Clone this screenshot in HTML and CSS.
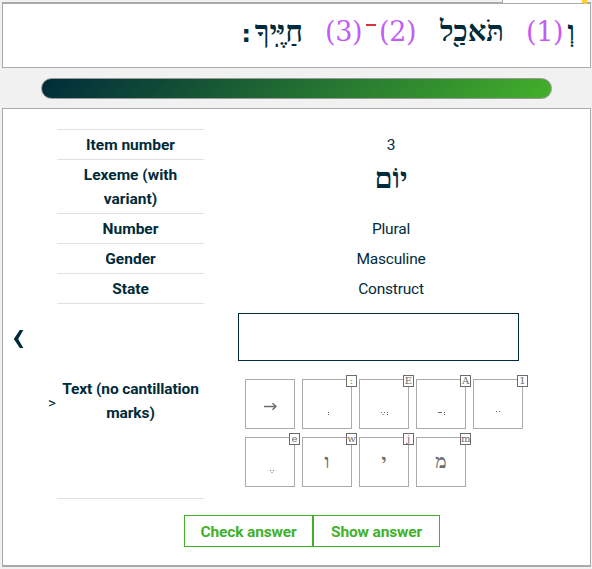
FILE: index.html
```html
<!DOCTYPE html>
<html lang="en">
<head>
<meta charset="utf-8">
<title>Quiz</title>
<link rel="stylesheet" href="styles.css">
</head>
<body>
<header class="verse">
  <div class="corner"></div>
  <span class="word word-end" lang="he">חַיֶּֽיךָ<span class="stop">׃</span></span>
  <span class="ref">(3)</span>
  <span class="maqaf"></span>
  <span class="ref ref-two">(2)</span>
  <span class="word word-mid" lang="he">תֹּאכַ֖ל</span>
  <span class="ref ref-one">(1)</span>
  <span class="word word-vav" lang="he">וְ</span>
</header>
<div class="progress"><div class="bar"></div></div>
<main class="panel">
  <div class="prev"><svg width="11" height="18" viewBox="0 0 11 18"><path d="M6.8 0H10.3L5.2 9L10.3 18H6.8L.8 9Z"/></svg></div>
  <div class="content">
    <div class="row"><div class="label">Item number</div><div class="value">3</div></div>
    <div class="row tall"><div class="label">Lexeme (with<br>variant)</div><div class="value"><span class="lexeme" lang="he">יוֹם</span></div></div>
    <div class="row"><div class="label">Number</div><div class="value">Plural</div></div>
    <div class="row"><div class="label">Gender</div><div class="value">Masculine</div></div>
    <div class="row"><div class="label">State</div><div class="value">Construct</div></div>
    <div class="row answer">
      <div class="label"><span class="marker">&gt;</span>Text (no cantillation<br>marks)</div>
      <div class="entry">
        <div class="field"></div>
        <div class="keys">
          <div class="key"><svg class="arrow" width="13" height="9" viewBox="0 0 13 9"><path d="M0 4.5H12M8.5 1.3L12 4.5L8.5 7.7"/></svg></div>
          <div class="key"><svg class="points" width="12" height="5"><path d="M7 0h1v1h-1zM7 2h1v1h-1z"/></svg><kbd>:</kbd></div>
          <div class="key"><svg class="points" width="12" height="5"><path d="M3 0h1v1h-1zM6 0h1v1h-1zM4.500 2h1v1h-1zM9 0h1v1h-1zM9 2h1v1h-1z"/></svg><kbd>E</kbd></div>
          <div class="key"><svg class="points" width="12" height="5"><path d="M3 0h4v1h-4zM9 0h1v1h-1zM9 2h1v1h-1z"/></svg><kbd>A</kbd></div>
          <div class="key"><svg class="points raised" width="12" height="5"><path d="M4 0h1v1h-1zM7 0h1v1h-1z"/></svg><kbd>1</kbd></div>
          <div class="key"><svg class="points" width="12" height="5"><path d="M6 0h1v1h-1zM9 0h1v1h-1zM7.500 2h1v1h-1z"/></svg><kbd>e</kbd></div>
          <div class="key"><span lang="he">ו</span><kbd>w</kbd></div>
          <div class="key"><span lang="he">י</span><kbd>j</kbd></div>
          <div class="key"><span lang="he">מ</span><kbd>m</kbd></div>
        </div>
      </div>
    </div>
    <div class="actions"><button class="check">Check answer</button><button class="show">Show answer</button></div>
  </div>
</main>
</body>
</html>
```

FILE: styles.css
```css
* { box-sizing: border-box; }
body {
  margin: 0;
  padding: 2px 1px 0 2px;
  height: 569px;
  overflow: hidden;
  background: #f1f1f1;
  color: #002b3a;
  font: 16px/24px Roboto, sans-serif;
}
.verse {
  position: relative;
  display: flex;
  height: 66px;
  padding: 7px 0 0 236px;
  background: #fff;
  border: 1px solid #aaa;
  border-top-width: 2px;
  line-height: 40px;
  white-space: nowrap;
}
.corner {
  position: absolute;
  top: -4px;
  right: 3px;
  width: 85px;
  height: 4px;
  background: #fff;
  border-left: 1px solid #aaa;
  border-right: 5px solid #ffd034;
  border-bottom: 1px solid #aaa;
}
.word {
  width: 66px;
  direction: rtl;
  font: 700 29px/41px "Liberation Serif", serif;
}
.word-end { width: 64px; font-size: 30px; }
.stop {
  display: inline-block;
  margin-right: 4px;
  font: 700 24px/30px "DejaVu Sans", sans-serif;
}
.ref {
  width: 38px;
  margin-left: 22px;
  color: #c35cf5;
  font: 27px/41px "DejaVu Serif", serif;
  letter-spacing: -.4px;
}
.maqaf { width: 10px; height: 2px; margin: 13px 0 0 3px; background: #e0303f; }
.ref-two { margin-left: 3px; }
.word-mid { margin-left: 21px; }
.ref-one { margin-left: 22px; }
.word-vav { width: 8px; margin-left: 3px; }
.progress { padding: 10px 0 9px 39px; }
.bar {
  width: 511px;
  height: 21px;
  border: 1px solid #999;
  border-radius: 11px;
  background: linear-gradient(135deg, #002b3a, #43b02a);
}
.panel {
  display: flex;
  height: 459px;
  background: #fff;
  border: 1px solid #aaa;
  border-bottom-width: 2px;
}
.prev { display: flex; width: 54px; padding: 221px 0 0 10px; }
.prev path { fill: #002b3a; }
.content { width: 521px; padding-top: 20px; }
.row { display: grid; grid-template-columns: 147px 374px; height: 30px; }
.label {
  padding-top: 3px;
  border-top: 1px solid #dee2e6;
  font-weight: 700;
  font-size: 15.5px;
  text-align: center;
  white-space: nowrap;
}
.value { padding-top: 4px; text-align: center; font-size: 15.5px; letter-spacing: -.2px; }
.tall { height: 54px; }
.lexeme { font: 700 29px/31px "Liberation Serif", serif; letter-spacing: 0; }
.answer { height: 196px; }
.answer .label { position: relative; padding-top: 73px; border-bottom: 1px solid #dee2e6; letter-spacing: -.1px; }
.marker { position: absolute; left: -9px; top: 87px; font-weight: 400; font-size: 15px; }
.entry { padding: 10px 0 0 34px; }
.field { width: 281px; height: 48px; border: 1px solid #002b3a; }
.keys {
  display: grid;
  grid-template-columns: repeat(5, 50px);
  gap: 8px 7px;
  padding: 18px 0 0 7px;
}
.key {
  position: relative;
  display: flex;
  align-items: center;
  justify-content: center;
  height: 50px;
  border: 1px solid #aaa;
  color: #6c6c6c;
  font: 700 19px/24px "Liberation Serif", serif;
}
.key kbd {
  position: absolute;
  top: -5px;
  right: -6px;
  width: 11px;
  height: 12px;
  border: 1px solid #6c6c6c;
  background: #fff;
  font: 10px/9px "DejaVu Serif", serif;
  text-align: center;
}
.arrow { margin-top: 4px; }
.arrow path { fill: none; stroke: #6c6c6c; stroke-width: 1.5; }
.points { margin-top: 21px; }
.points path { fill: #666; }
.raised { margin-top: 18px; }
.actions { display: flex; padding: 16px 0 0 127px; }
button {
  height: 32px;
  padding: 2px 0 0;
  border: 1px solid #43b02a;
  background: #fff;
  color: #43b02a;
  font: 700 15.5px/24px Roboto, sans-serif;
  letter-spacing: -.15px;
}
.check { width: 129px; }
.show { width: 127px; }
```
